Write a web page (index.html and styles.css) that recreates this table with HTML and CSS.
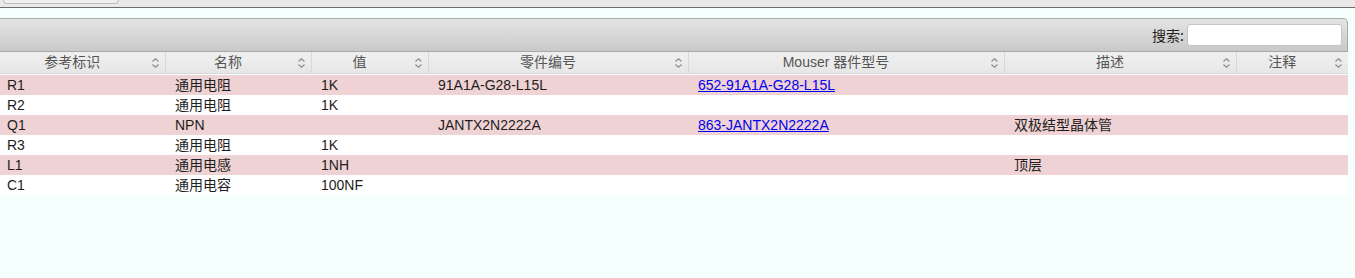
FILE: index.html
```html
<!DOCTYPE html>
<html lang="zh">
<head>
<meta charset="utf-8">
<title>BOM</title>
<link rel="stylesheet" href="styles.css">
</head>
<body>
<div class="topbar"><div class="topbtn"></div></div>
<div class="spacer"></div>
<div class="wrap">
  <div class="toolbar">
    <label class="search">搜索: <input type="text" class="search-input"></label>
  </div>
  <table class="bom">
    <colgroup>
      <col class="c1"><col class="c2"><col class="c3"><col class="c4"><col class="c5"><col class="c6"><col class="c7">
    </colgroup>
    <thead>
      <tr>
        <th><span class="th-label">参考标识</span><svg class="sort" viewBox="0 0 7 10"><path d="M0.5 3.5 L3.5 0.8 L6.5 3.5 M0.5 6.5 L3.5 9.2 L6.5 6.5"/></svg></th>
        <th><span class="th-label">名称</span><svg class="sort" viewBox="0 0 7 10"><path d="M0.5 3.5 L3.5 0.8 L6.5 3.5 M0.5 6.5 L3.5 9.2 L6.5 6.5"/></svg></th>
        <th><span class="th-label">值</span><svg class="sort" viewBox="0 0 7 10"><path d="M0.5 3.5 L3.5 0.8 L6.5 3.5 M0.5 6.5 L3.5 9.2 L6.5 6.5"/></svg></th>
        <th><span class="th-label">零件编号</span><svg class="sort" viewBox="0 0 7 10"><path d="M0.5 3.5 L3.5 0.8 L6.5 3.5 M0.5 6.5 L3.5 9.2 L6.5 6.5"/></svg></th>
        <th><span class="th-label">Mouser 器件型号</span><svg class="sort" viewBox="0 0 7 10"><path d="M0.5 3.5 L3.5 0.8 L6.5 3.5 M0.5 6.5 L3.5 9.2 L6.5 6.5"/></svg></th>
        <th><span class="th-label">描述</span><svg class="sort" viewBox="0 0 7 10"><path d="M0.5 3.5 L3.5 0.8 L6.5 3.5 M0.5 6.5 L3.5 9.2 L6.5 6.5"/></svg></th>
        <th class="last"><span class="th-label">注释</span><svg class="sort" viewBox="0 0 7 10"><path d="M0.5 3.5 L3.5 0.8 L6.5 3.5 M0.5 6.5 L3.5 9.2 L6.5 6.5"/></svg></th>
      </tr>
    </thead>
    <tbody>
      <tr class="odd"><td>R1</td><td>通用电阻</td><td>1K</td><td>91A1A-G28-L15L</td><td><a href="#">652-91A1A-G28-L15L</a></td><td></td><td></td></tr>
      <tr><td>R2</td><td>通用电阻</td><td>1K</td><td></td><td></td><td></td><td></td></tr>
      <tr class="odd"><td>Q1</td><td>NPN</td><td></td><td>JANTX2N2222A</td><td><a href="#">863-JANTX2N2222A</a></td><td>双极结型晶体管</td><td></td></tr>
      <tr><td>R3</td><td>通用电阻</td><td>1K</td><td></td><td></td><td></td><td></td></tr>
      <tr class="odd"><td>L1</td><td>通用电感</td><td>1NH</td><td></td><td></td><td>顶层</td><td></td></tr>
      <tr><td>C1</td><td>通用电容</td><td>100NF</td><td></td><td></td><td></td><td></td></tr>
    </tbody>
  </table>
</div>
</body>
</html>
```
FILE: styles.css
```css
html, body {
  margin: 0;
  padding: 0;
}
body {
  background: #f5fffe;
  font-family: "Liberation Sans", Arial, "Noto Sans CJK SC", sans-serif;
  font-size: 14px;
  color: #1e1e1e;
}
.topbar {
  height: 7px;
  background: #e9e9e9;
  border-bottom: 1px solid #6b6b6b;
  overflow: hidden;
}
.topbtn {
  width: 114px;
  height: 3px;
  margin-left: 3px;
  border: 1px solid #bdbdbd;
  border-top: none;
  border-radius: 0 0 6px 6px;
  background: #efefef;
}
.spacer {
  height: 10px;
}
.wrap {
  width: 1348px;
}
.toolbar {
  height: 32px;
  border-top: 1px solid #a9a9a9;
  border-right: 1px solid #a9a9a9;
  border-bottom: 1px solid #a9a9a9;
  border-top-right-radius: 5px;
  background: linear-gradient(#e4e4e4, #c9c9c9);
  display: flex;
  justify-content: flex-end;
  align-items: center;
  padding-right: 5px;
}
.search {
  display: flex;
  align-items: center;
  gap: 3px;
  color: #222;
  font-family: "Noto Sans CJK SC", sans-serif;
  font-size: 14px;
}
.search-input {
  width: 151px;
  height: 18px;
  margin: 0;
  padding: 1px;
  border: 1px solid #c4c4c4;
  border-radius: 3px;
  background: #fff;
}
.bom {
  width: 1348px;
  border-collapse: collapse;
  table-layout: fixed;
}
.c1 { width: 165px; }
.c2 { width: 146px; }
.c3 { width: 117px; }
.c4 { width: 260px; }
.c5 { width: 316px; }
.c6 { width: 232px; }
.c7 { width: 112px; }
.bom th {
  position: relative;
  height: 21px;
  padding: 0 20px 0 0;
  font-weight: normal;
  color: #555;
  text-align: center;
  background: linear-gradient(#efefef 0%, #ececec 50%, #e6e6e6 100%);
  border-right: 1px solid #d8d8d8;
  border-bottom: 1px solid #d8d8d8;
  line-height: 21px;
  white-space: nowrap;
}
.bom th.last {
  border-right: none;
}
.th-label {
  font-family: "Liberation Sans", Arial, "Noto Sans CJK SC", sans-serif;
}
.sort {
  position: absolute;
  right: 6px;
  top: 6px;
  width: 7px;
  height: 10px;
  fill: none;
  stroke: #8a8a8a;
  stroke-width: 1.1;
}
.bom tbody::before {
  content: "";
  display: block;
  height: 1px;
}
.bom td {
  height: 20px;
  padding: 0 0 0 10px;
  line-height: 20px;
  white-space: nowrap;
  overflow: hidden;
}
.bom td:first-child {
  padding-left: 7px;
}
.bom tbody tr {
  background: #fff;
}
.bom tbody tr.odd {
  background: #efd2d3;
}
.bom a {
  color: #0000ee;
  text-decoration: underline;
}
```
